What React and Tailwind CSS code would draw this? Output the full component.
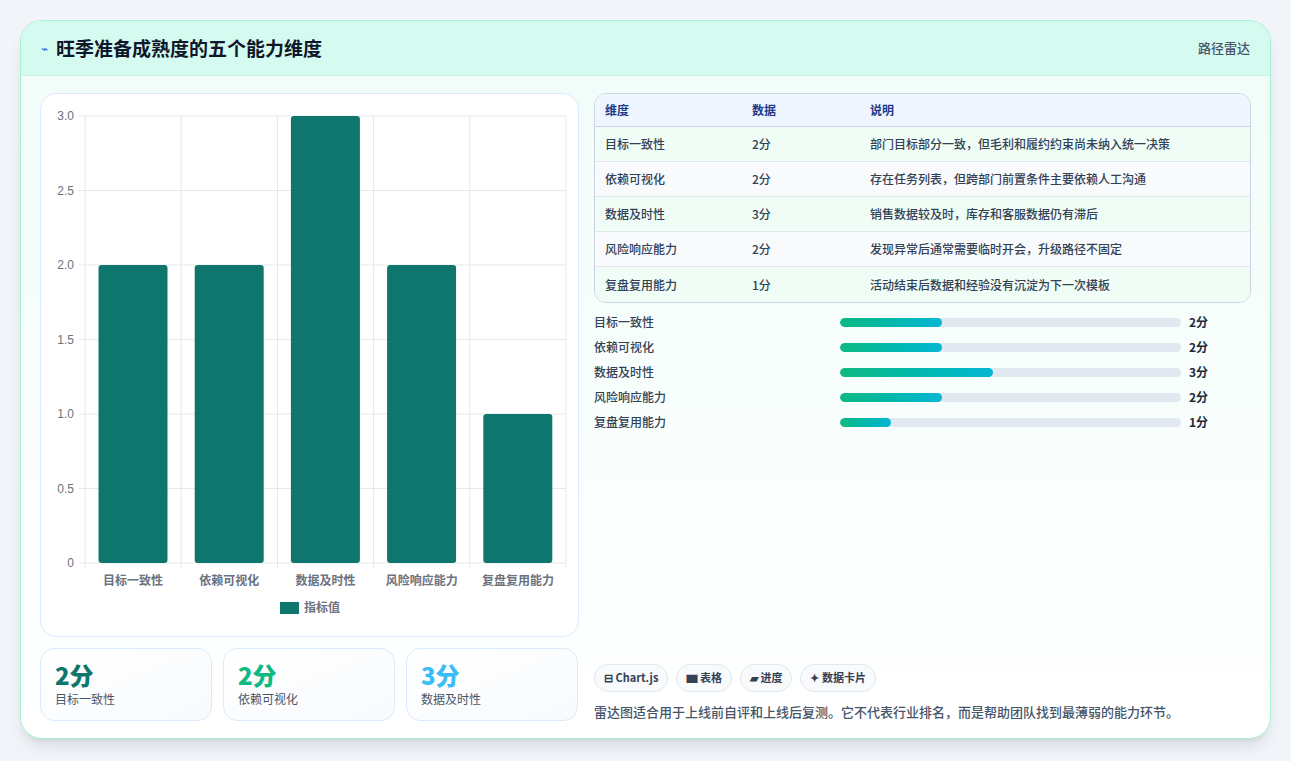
const rows = [
  ['目标一致性', 2, '部门目标部分一致，但毛利和履约约束尚未纳入统一决策'],
  ['依赖可视化', 2, '存在任务列表，但跨部门前置条件主要依赖人工沟通'],
  ['数据及时性', 3, '销售数据较及时，库存和客服数据仍有滞后'],
  ['风险响应能力', 2, '发现异常后通常需要临时开会，升级路径不固定'],
  ['复盘复用能力', 1, '活动结束后数据和经验没有沉淀为下一次模板'],
];

function Chart() {
  const x0 = 44, x1 = 525, y0 = 469, yTop = 22;
  const h = (y0 - yTop) / 3;
  const cw = (x1 - x0) / 5;
  return (
    <svg width="538" height="543" className="block" style={{ fontFamily: '"Liberation Sans", "Noto Sans CJK SC", sans-serif' }}>
      {[0, 0.5, 1, 1.5, 2, 2.5, 3].map((v) => {
        const y = y0 - v * h;
        return (
          <g key={v}>
            <line x1={x0 - 6} x2={x1} y1={y} y2={y} stroke="#e5e7eb" />
            <text x={x0 - 11} y={y + 4} textAnchor="end" fontSize="12" fill="#6b7280">{v === 0 ? '0' : v.toFixed(1)}</text>
          </g>
        );
      })}
      {[0, 1, 2, 3, 4, 5].map((i) => (
        <line key={i} x1={x0 + i * cw} x2={x0 + i * cw} y1={yTop} y2={y0 + 6} stroke="#e5e7eb" />
      ))}
      {rows.map(([n, v], i) => (
        <g key={n}>
          <rect x={x0 + i * cw + 13.5} y={y0 - v * h} width={69} height={v * h} rx="3" fill="#0f766e" />
          <text x={x0 + i * cw + cw / 2} y={y0 + 22} textAnchor="middle" fontSize="12" fill="#6b7280" fontWeight="600">{n}</text>
        </g>
      ))}
      <rect x="239" y="508" width="19" height="12" fill="#0f766e" />
      <text x="263" y="518" fontSize="12" fill="#6b7280" fontWeight="600">指标值</text>
    </svg>
  );
}

export default function App() {
  return (
    <div className="w-[1291px] h-[761px] bg-[#f1f5f9] pt-5 px-5" style={{ fontFamily: '"Noto Sans CJK SC", "Noto Sans", sans-serif' }}>
      <div className="h-[719px] rounded-[22px] border border-[#a7f3d0] bg-gradient-to-b from-[#f0fdf9] to-white shadow-lg overflow-hidden">
        <div className="h-[55px] flex items-center justify-between px-5 bg-[#d5faf0] border-b border-[#ccf2e6]">
          <div className="flex items-center gap-2">
            <span className="text-[#2563eb] text-xs">⌁</span>
            <h1 className="text-[19px] font-bold text-[#0f172a]">旺季准备成熟度的五个能力维度</h1>
          </div>
          <span className="text-[13px] text-[#475569] font-medium">路径雷达</span>
        </div>
        <div className="flex gap-[15px] px-[19px] pt-[17px]">
          <div className="w-[539px] flex flex-col gap-[11px]">
            <div className="h-[544px] rounded-[16px] border border-[#dbeafe] bg-white"><Chart /></div>
            <div className="flex gap-[11px]">
              {[['2分', '目标一致性', 'text-[#0f766e]'], ['2分', '依赖可视化', 'text-[#10b981]'], ['3分', '数据及时性', 'text-[#38bdf8]']].map(([v, l, c]) => (
                <div key={l} className="w-[172px] h-[73px] rounded-[14px] border border-[#dbeafe] bg-gradient-to-br from-white to-[#f8fafc] px-[14px] pt-[10px]">
                  <div className={`text-[24px] font-extrabold leading-8 ${c}`}>{v}</div>
                  <div className="text-xs text-[#475569]">{l}</div>
                </div>
              ))}
            </div>
          </div>
          <div className="w-[659px] flex flex-col">
            <div className="rounded-[12px] border border-[#cbd5e1] overflow-hidden text-xs">
              <div className="flex h-[33px] items-center bg-[#eff6ff] border-b border-[#cbd5e1] text-[#1e3a8a] font-semibold">
                <div className="w-[157px] pl-[10px]">维度</div><div className="w-[118px]">数据</div><div>说明</div>
              </div>
              {rows.map(([n, v, d], i) => (
                <div key={n} className={`flex h-[35px] items-center text-[#334155] font-medium ${i < 4 ? 'border-b border-[#e2e8f0]' : ''} ${i % 2 ? 'bg-[#f8fafc]' : 'bg-[#f0fdf6]'}`}>
                  <div className="w-[157px] pl-[10px]">{n}</div><div className="w-[118px]">{v}分</div><div>{d}</div>
                </div>
              ))}
            </div>
            <div className="mt-[10px] flex flex-col gap-[7px]">
              {rows.map(([n, v]) => (
                <div key={n} className="flex items-center h-[18px] text-xs">
                  <div className="w-[246px] text-[#334155] font-medium">{n}</div>
                  <div className="w-[341px] h-[9px] rounded-full bg-[#e2e8f0] overflow-hidden">
                    <div className="h-full rounded-full bg-gradient-to-r from-[#10b981] to-[#06b6d4]" style={{ width: `${v * 15}%` }} />
                  </div>
                  <div className="ml-2 font-bold text-[#1e293b]">{v}分</div>
                </div>
              ))}
            </div>
            <div className="mt-auto flex gap-2 pt-2">
              {['⊟ Chart.js', '▆ 表格', '▰ 进度', '✦ 数据卡片'].map((t) => (
                <span key={t} className="h-[28px] px-[9px] flex items-center rounded-full border border-[#e2e8f0] bg-[#f8fafc] text-[11px] font-semibold text-[#334155]">{t}</span>
              ))}
            </div>
            <p className="mt-[10px] text-[13px] text-[#475569] font-medium">雷达图适合用于上线前自评和上线后复测。它不代表行业排名，而是帮助团队找到最薄弱的能力环节。</p>
          </div>
        </div>
      </div>
    </div>
  );
}
